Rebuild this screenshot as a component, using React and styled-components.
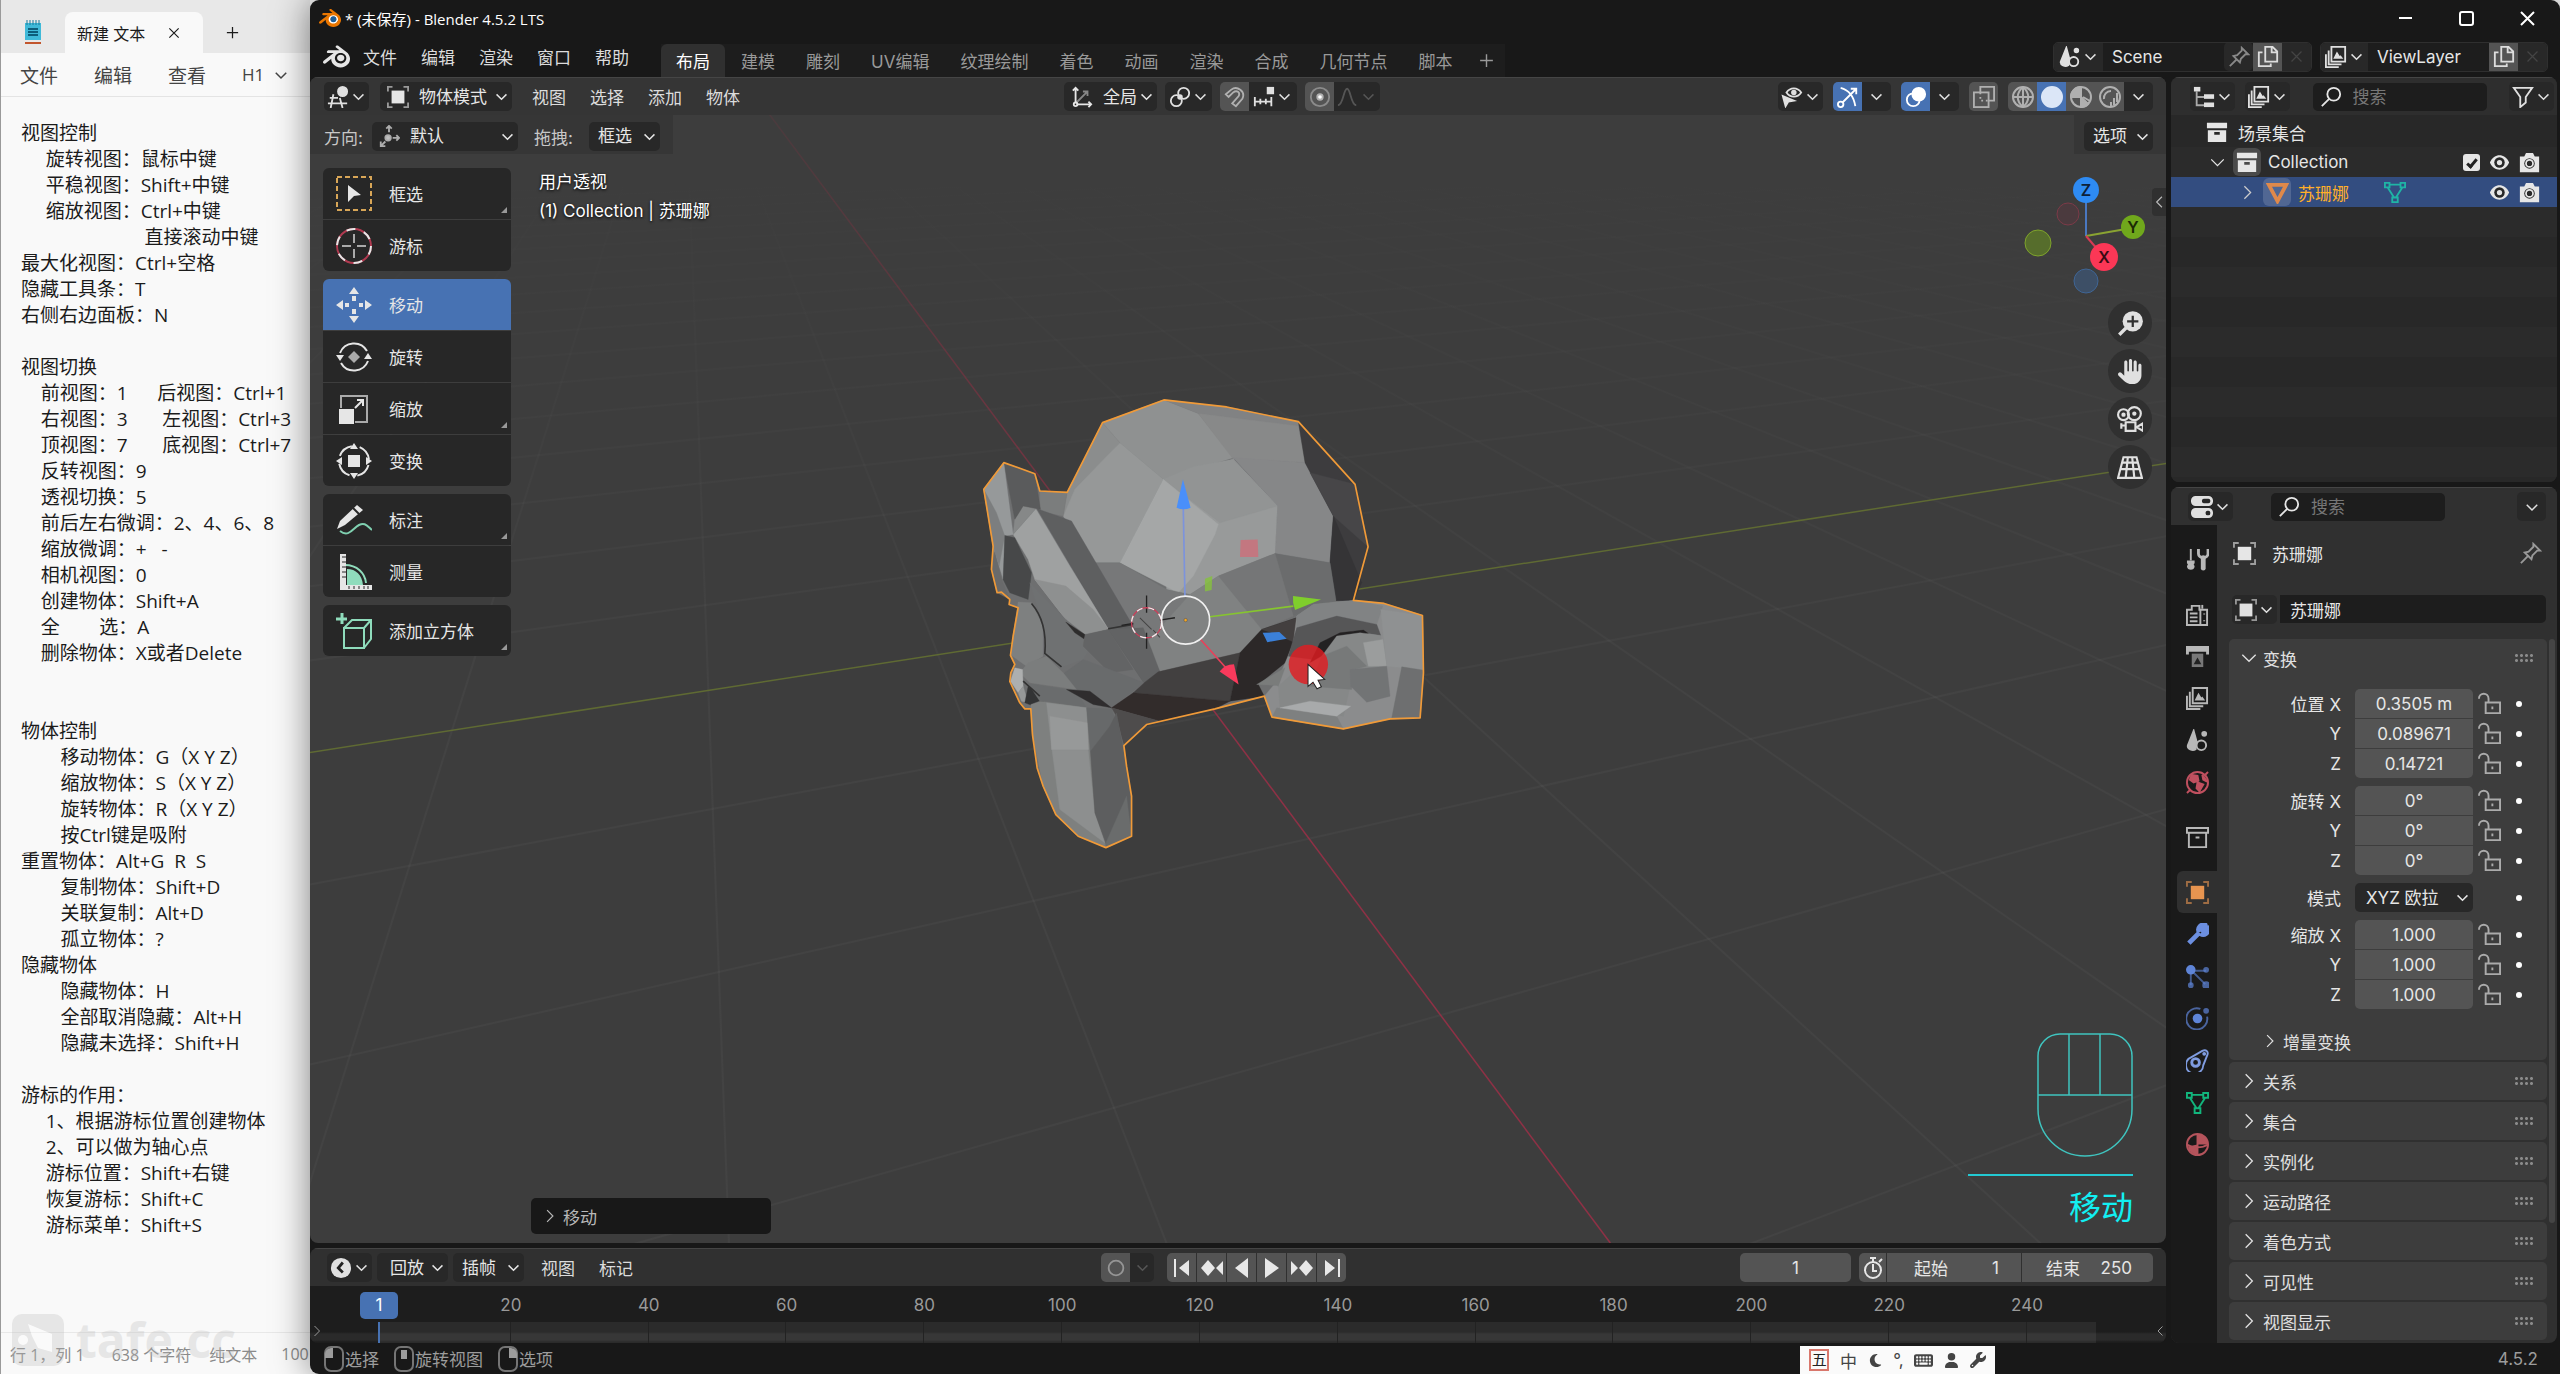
import React from 'react'
import styled, { createGlobalStyle } from 'styled-components'
import { SiBlender } from 'react-icons/si'
import { FaHand, FaUser, FaWrench, FaMoon, FaKeyboard } from 'react-icons/fa6'

const GlobalStyle = createGlobalStyle`
  *, *::before, *::after {
    box-sizing: border-box;
  }
  body {
    margin: 0;
    background: #f9f9f9;
    overflow: hidden;
  }
  body, button, input, select, textarea {
    font-family: Inter, "Noto Sans CJK SC", sans-serif;
    font-size: 17px;
  }
  button, input, select, textarea {
    margin: 0;
    padding: 0;
    border: 0;
    outline: 0;
    background: none;
    color: inherit;
  }
  svg {
    flex: none;
    display: block;
  }
`

/* ---------- icons ---------- */

const glyphs = {
  down: <path d="M5 9l7 7 7-7" />,
  right: <path d="M7 2l10 10-10 10" />,
  left: <path d="M17 3l-9 9 9 9" />,
  wideDown: <path d="M2 7l10 10 10-10" />,
  plus: <path d="M12 3v18M3 12h18" />,
  close: <path d="M4 4l16 16M20 4L4 20" />,
  search: <g><circle cx="15" cy="9" r="7" /><path d="M10 14l-8 8" /></g>,
  pin: <path d="M2 22l7-7M6 11l7 7 1-4 5-5 3 0-7-7 0 3-5 5z" />,
  filter: <path d="M2 2h20l-7 10v6l-6 5V12z" />,
  viewport: <g><path d="M7 9L4 24M14 13l3 11M1 19h21M3 13h9" /><circle cx="17" cy="6" r="5" fill="currentColor" /></g>,
  object: <g><path d="M1 6V1h5M18 1h5v5M23 18v5h-5M6 23H1v-5" opacity=".6" /><rect x="6" y="6" width="12" height="12" fill="currentColor" /></g>,
  orient: <g><path d="M6 18L17 7M13 6h5v5" opacity=".5" /><path d="M5 18V2M2 5l3-3 3 3M6 20h16M19 17l3 3-3 3" /><circle cx="5" cy="20" r="2" /></g>,
  orientDot: <g opacity=".7"><path d="M12 8V1M9 4l3-3 3 3M16 14h7M20 11l3 3-3 3M8 18l-5 5M3 18v5h5" /><circle cx="11" cy="14" r="3" fill="#fff" /></g>,
  pivot: <g><circle cx="16" cy="8" r="6" /><circle cx="8" cy="16" r="6" /><circle cx="12" cy="12" r="2" fill="currentColor" /></g>,
  magnet: <path d="M2 9l6-5c6-5 16 2 12 10l-7 8-4-3 7-8c2-4-2-7-6-4l-5 5z" />,
  increment: <g><path d="M2 12v10M8 14v6M14 14v6M20 12v10M2 17h18" /><rect x="16" y="2" width="6" height="6" fill="currentColor" /></g>,
  proportional: <g><circle cx="12" cy="12" r="10" opacity=".6" /><circle cx="12" cy="12" r="3" fill="#fff" /></g>,
  falloff: <path d="M1 21c6 0 6-18 10-18s4 18 10 18" />,
  visibility: <g><path d="M6 7c4-6 12-6 16 0-4 6-12 6-16 0z" /><circle cx="14" cy="7" r="2" fill="currentColor" /><path d="M2 11l3 11 3-5 6-1z" fill="currentColor" /></g>,
  gizmo: <g><path d="M4 2c8 2 14 8 16 20M6 18L21 3M15 3h6v6" /><circle cx="4" cy="20" r="3" /></g>,
  overlay: <g><circle cx="9" cy="15" r="7" /><circle cx="15" cy="9" r="7" fill="currentColor" /></g>,
  xray: <g><path d="M8 7V1h15v15h-6" /><rect x="1" y="7" width="16" height="16" /><path d="M8 7v9h9" strokeDasharray="2 3" /></g>,
  wire: <g><circle cx="12" cy="12" r="10" /><path d="M2 12h20M12 2v20M12 2c-7 6-7 14 0 20M12 2c7 6 7 14 0 20" /></g>,
  solid: <circle cx="12" cy="12" r="10" fill="currentColor" />,
  material: <g><circle cx="12" cy="12" r="10" /><path d="M12 2v10H2a10 10 0 0 1 10-10M12 12l7 7a10 10 0 0 1-7 3z" fill="currentColor" /><path d="M14 12l7 4M14 15l5 4" /></g>,
  rendered: <g><circle cx="12" cy="12" r="10" /><path d="M6 14a7 7 0 0 1 7-8" /><path d="M19 8v9M16 13v7M13 17v4" /></g>,
  scene: <g><path d="M8 2L2 17c-1 4 5 6 8 4l1-8z" fill="currentColor" /><circle cx="16" cy="17" r="5" /><circle cx="19" cy="5" r="2" fill="currentColor" /></g>,
  layers: <g><path d="M7 1h15v16H7zM4 5v15h14M1 9v14h14" /><path d="M9 14l4-8 3 5 1-1 3 4z" fill="currentColor" stroke="none" /></g>,
  copy: <g><path d="M9 1h8l5 5v11H9zM16 1v6h6" /><path d="M6 7H2v15h13v-3" /></g>,
  tree: <g><path d="M4 6v15h8M4 12h8" opacity=".7" /><rect x="1" y="1" width="7" height="5" fill="currentColor" stroke="none" /><rect x="12" y="9" width="11" height="5" fill="currentColor" stroke="none" /><rect x="12" y="18" width="11" height="5" fill="currentColor" stroke="none" /></g>,
  collection: <path fillRule="evenodd" stroke="none" fill="currentColor" d="M1 2h22v6H1zM2 10h20v13H2zM9 12h6v3H9z" />,
  archive: <path d="M1 2h22v5H1zM3 7v15h18V7M10 12h4" />,
  meshObject: <path d="M3 4h18l-9 17z" strokeWidth="4" />,
  mesh: <path d="M1 2h5v5H1zM18 2h5v5h-5zM9 18h6v5H9zM6 4h12M4 7l7 11M20 7l-7 11" />,
  eye: <g><path d="M1 12c5-11 17-11 22 0-5 11-17 11-22 0z" fill="currentColor" stroke="none" /><circle cx="12" cy="12" r="6" fill="#282828" stroke="none" /><circle cx="12" cy="12" r="3" fill="currentColor" stroke="none" /></g>,
  camera: <g><path d="M1 5h5l2-4h8l2 4h5v18H1z" fill="currentColor" stroke="none" /><circle cx="12" cy="13" r="6" fill="#282828" stroke="none" /><circle cx="12" cy="13" r="4" /></g>,
  props: <g><rect x="1" y="1" width="22" height="9" rx="4" fill="currentColor" /><rect x="12" y="3" width="9" height="5" rx="2" fill="#282828" stroke="none" /><rect x="1" y="14" width="22" height="9" rx="4" fill="currentColor" /><rect x="16" y="16" width="5" height="5" rx="2" fill="#282828" stroke="none" /></g>,
  tool: <g><path d="M5 1v12" /><path d="M1 13h8v3l-1 1 1 2c0 5-8 5-8 0l1-2-1-1z" fill="currentColor" stroke="none" /><path d="M13 1v5c0 2 2 4 5 4s5-2 5-4V1" strokeWidth="3" /><path d="M18 10v11" strokeWidth="5" strokeLinecap="round" /></g>,
  render: <g><path d="M1 7h5V3h8v4h8v16H1z" /><path d="M15 7v16M4 11h8M4 15h8M4 19h8M19 11v1M19 18v1" /><path d="M17 2v4" /></g>,
  output: <g><path d="M0 1h24v9h-3V7H3v3H0z" fill="currentColor" stroke="none" /><path d="M6 9h12v14H6z" fill="currentColor" opacity=".6" stroke="none" /><path d="M8 20l4-7 4 7z" fill="#222" stroke="none" /></g>,
  world: <g><circle cx="12" cy="12" r="11" /><path d="M6 4l6 1 1 5-5 2-4-3zM12 12l6 2-4 7-3-3zM17 4l5 7-4-2z" fill="currentColor" /><path d="M1 23l4-4M19 5l4-4" /></g>,
  modifier: <path d="M3 21L14 10M14 10c-3-5 2-9 6-8l-4 4 3 3 4-4c1 5-4 9-8 6" strokeWidth="5" strokeLinejoin="round" />,
  particles: <g><path d="M6 6h15M5 6v15M6 6l14 14" opacity=".6" /><circle cx="5" cy="5" r="4" fill="currentColor" /><circle cx="21" cy="5" r="2" fill="currentColor" opacity=".7" /><circle cx="5" cy="21" r="2" fill="currentColor" opacity=".7" /><circle cx="21" cy="21" r="3" fill="currentColor" opacity=".7" /></g>,
  physics: <g><path d="M15 2a11 11 0 1 0 7 8" opacity=".7" /><circle cx="12" cy="12" r="5" fill="currentColor" stroke="none" /><circle cx="21" cy="4" r="3" fill="currentColor" stroke="none" opacity=".7" /></g>,
  constraint: <g><path d="M3 10L17 2c4-2 7 1 5 5l-4 10a9 9 0 1 1-15-7z" /><circle cx="10" cy="14" r="4" strokeWidth="3" /><circle cx="19" cy="5" r="1" /></g>,
  matBall: <g><circle cx="12" cy="12" r="11" /><path d="M12 1v11h11A11 11 0 0 0 12 1zM12 12v11A11 11 0 0 1 2 14z" fill="currentColor" stroke="none" /><path d="M12 1v22M1 12c6 4 16 4 22 0" /></g>,
  unlock: <g opacity=".65"><path d="M1 7c0-7 10-7 10 0v4" /><path d="M8 11h15v11H8zM15 15v3" /></g>,
  clock: <g><circle cx="12" cy="12" r="11" fill="currentColor" stroke="none" /><path d="M14 6l-5 6 5 5" stroke="#222" strokeWidth="3" /></g>,
  stopwatch: <g><circle cx="12" cy="14" r="8" /><path d="M12 8v7h4M9 2h6M12 2v4M18 6l3-3" /></g>,
  record: <circle cx="12" cy="12" r="8" opacity=".7" />,
  first: <path d="M4 3h2v18H4zM19 4v16L9 12z" fill="currentColor" stroke="none" />,
  prevKey: <path d="M8 4l7 8-7 8-7-8zM23 5v14l-7-7z" fill="currentColor" stroke="none" />,
  playBack: <path d="M18 2v20L5 12z" fill="currentColor" stroke="none" />,
  play: <path d="M5 2v20l14-10z" fill="currentColor" stroke="none" />,
  nextKey: <path d="M16 4l7 8-7 8-7-8zM1 5v14l7-7z" fill="currentColor" stroke="none" />,
  last: <path d="M18 3h2v18h-2zM5 4v16l10-8z" fill="currentColor" stroke="none" />,
  zoomIn: <g><circle cx="14" cy="10" r="9" fill="currentColor" stroke="none" /><path d="M8 16l-6 6" strokeWidth="3" /><path d="M9 10h10M14 5v10" stroke="#303030" /></g>,
  cameraView: <g><circle cx="6" cy="8" r="5" /><circle cx="16" cy="7" r="6" /><circle cx="6" cy="8" r="1" /><circle cx="16" cy="7" r="1" /><path d="M8 15h9v8H8zM4 16v5M4 18h4M24 16v7l-5-3v-1z" /></g>,
  perspective: <path d="M6 3h12l5 19H1zM5 8h14M3 14h18M10 3L8 22M14 3l2 19" />
}

function Icon({ name, size = 22, color = 'currentColor', stroke = 2 }) {
  return (
    <svg width={size} height={size} viewBox="0 0 24 24" fill="none" color={color} stroke="currentColor" strokeWidth={stroke} aria-hidden="true">
      {glyphs[name]}
    </svg>
  )
}

const toolGlyphs = {
  select: <g><rect x="1" y="1" width="34" height="33" stroke="#d8a657" strokeDasharray="5 3" /><path d="M12 9l13 10-7 1-6 6z" fill="currentColor" stroke="none" /></g>,
  cursor: <g><circle cx="18" cy="18" r="17" stroke="#b03a50" /><circle cx="18" cy="18" r="17" strokeDasharray="9 9" /><path d="M18 6v9M18 21v9M6 18h9M21 18h9" stroke="#aaa" /></g>,
  move: <path d="M18 0l5 7H13zM18 36l5-7H13zM0 18l7-5v10zM36 18l-7-5v10zM16 9h4v5h-4zM16 22h4v5h-4zM9 16h4v4H9zM23 16h4v4h-4z" fill="currentColor" stroke="none" />,
  rotate: <g><path d="M4 14a15 15 0 0 1 27-2M32 22a15 15 0 0 1-27 2" /><path d="M0 16h8l-4 6zM28 20h8l-4-6z" fill="currentColor" stroke="none" /><path d="M18 12l6 6-6 6-6-6z" fill="#aaa" stroke="none" /></g>,
  scale: <g><path d="M5 17V5h26v26H19" stroke="#aaa" /><path d="M3 18h15v15H3z" fill="currentColor" stroke="none" /><path d="M19 17l8-8M21 9h6v6" /></g>,
  transform: <g><circle cx="18" cy="18" r="15" strokeDasharray="16 8" strokeDashoffset="-4" /><path d="M12 12h12v12H12zM18 0l4 6h-8zM18 36l4-6h-8zM0 18l6-4v8zM36 18l-6-4v8z" fill="currentColor" stroke="none" /></g>,
  annotate: <g><path d="M4 29c9 7 13-3 19-6 6-3 8 1 13 5" stroke="#7fd0b0" /><path d="M1 27l3-8L21 3l6 5L9 23z" fill="currentColor" stroke="none" /><path d="M17 6l6 6" stroke="#272727" /></g>,
  measure: <g><path d="M11 31V15c9 0 15 6 16 16z" fill="#8fdcbc" stroke="none" /><path d="M9 11c12 0 20 8 21 18" stroke="#8fdcbc" /><path d="M4 0h6v31h26v5H4z" fill="currentColor" stroke="none" /><path d="M10 3H6M10 8H6M10 13H6M10 18H6M10 23H6M13 35v-3M18 35v-3M23 35v-3M28 35v-3M32 35v-3" stroke="#272727" strokeWidth="1" /></g>,
  addCube: <g stroke="#8fdcbc"><path d="M8 15h20v20H8zM8 15l8-8h19v19l-7 9M28 15l7-8" /><path d="M6 0v11M0 6h11" strokeWidth="3" /></g>
}

function ToolIcon({ name }) {
  return (
    <svg width="36" height="36" viewBox="0 0 36 36" fill="none" stroke="currentColor" strokeWidth="2" aria-hidden="true">
      {toolGlyphs[name]}
    </svg>
  )
}

const AppLogo = () => (
  <svg width="22" height="22" viewBox="0 0 24 24" aria-hidden="true">
    <circle cx="15" cy="13" r="6" fill="#fff" />
    <SiBlender size={24} color="#ea7600" />
    <circle cx="15.7" cy="13.3" r="3.2" fill="#1d5f9c" />
  </svg>
)

const NotepadIcon = () => (
  <svg width="18" height="24" viewBox="0 0 18 24" aria-hidden="true">
    <path d="M1 3h16v17H1z" fill="#3fb9d8" />
    <path d="M1 20h16v2H1z" fill="#e8e8e8" />
    <path d="M1 22h16v2H1z" fill="#c2562d" />
    <path d="M3 0v5M6 0v5M9 0v5M12 0v5M15 0v5" stroke="#167a9c" />
    <path d="M4 9h10M4 12h10M4 15h10" stroke="#0c5d7a" strokeWidth="2" />
  </svg>
)

/* ---------- notes window ---------- */

const Desktop = styled.div`
  display: grid;
  grid-template-columns: 310px minmax(0, 1fr);
  grid-template-rows: minmax(0, 1fr);
  height: 100vh;
`
const Notes = styled.section`
  display: flex;
  flex-direction: column;
  overflow: hidden;
  border-left: 1px solid #9a9a9a;
  background: #f9f9f9;
  color: #1b1b1b;
  font-family: "Open Sans", "Noto Sans CJK SC", sans-serif;
  button, textarea {
    font-family: inherit;
  }
`
const NotesTabs = styled.div`
  display: flex;
  align-items: flex-end;
  height: 53px;
  padding-left: 23px;
  background: #e8e8e8;
  > svg {
    margin: 0 23px 9px 0;
  }
`
const NotesTab = styled.div`
  display: flex;
  align-items: center;
  justify-content: space-between;
  width: 138px;
  height: 41px;
  padding: 0 22px 0 12px;
  border-radius: 8px 8px 0 0;
  background: #f9f9f9;
  font-size: 16px;
`
const NotesAdd = styled.button`
  height: 41px;
  margin-left: 22px;
`
const NotesMenu = styled.div`
  display: flex;
  align-items: center;
  height: 44px;
  padding-left: 19px;
  gap: 36px;
  border-bottom: 1px solid #e4e4e4;
  color: #444;
  button {
    display: flex;
    align-items: center;
    gap: 8px;
    font-size: 19px;
    &:last-child {
      font-size: 17px;
    }
  }
`
const NotesText = styled.textarea`
  flex: 1;
  padding: 23px 0 0 20px;
  overflow: hidden;
  resize: none;
  white-space: pre;
  font-size: 19px;
  line-height: 26px;
`
const NotesStatus = styled.div`
  position: relative;
  display: flex;
  align-items: center;
  height: 42px;
  padding-left: 9px;
  gap: 18px;
  border-top: 1px solid #e8e8e8;
  color: #8a8a8a;
  font-size: 16px;
  white-space: nowrap;
`
const StatusItem = styled.span`
  &:nth-child(2) {
    margin-right: 9px;
  }
  &:last-child {
    margin-left: 6px;
  }
`
const Watermark = styled.div`
  position: absolute;
  left: 11px;
  bottom: 8px;
  display: flex;
  align-items: center;
  gap: 12px;
  opacity: .3;
  color: #bbb;
  font-size: 48px;
  font-weight: 700;
  line-height: 52px;
`

const noteText = `视图控制
     旋转视图：鼠标中键
     平稳视图：Shift+中键
     缩放视图：Ctrl+中键
                         直接滚动中键
最大化视图：Ctrl+空格
隐藏工具条：T
右侧右边面板：N

视图切换
    前视图：1      后视图：Ctrl+1
    右视图：3       左视图：Ctrl+3
    顶视图：7       底视图：Ctrl+7
    反转视图：9
    透视切换：5
    前后左右微调：2、4、6、8
    缩放微调：+   -
    相机视图：0
    创建物体：Shift+A
    全        选：A
    删除物体：X或者Delete


物体控制
        移动物体：G（X Y Z）
        缩放物体：S（X Y Z）
        旋转物体：R（X Y Z）
        按Ctrl键是吸附
重置物体：Alt+G  R  S
        复制物体：Shift+D
        关联复制：Alt+D
        孤立物体：?
隐藏物体
        隐藏物体：H
        全部取消隐藏：Alt+H
        隐藏未选择：Shift+H

游标的作用：
     1、根据游标位置创建物体
     2、可以做为轴心点
     游标位置：Shift+右键
     恢复游标：Shift+C
     游标菜单：Shift+S`

function NotesWindow() {
  return (
    <Notes>
      <NotesTabs>
        <NotepadIcon />
        <NotesTab>
          新建 文本
          <button aria-label="关闭"><Icon name="close" size={14} /></button>
        </NotesTab>
        <NotesAdd aria-label="新标签"><Icon name="plus" size={15} /></NotesAdd>
      </NotesTabs>
      <NotesMenu>
        <button>文件</button>
        <button>编辑</button>
        <button>查看</button>
        <button>H1 <Icon name="down" size={18} /></button>
      </NotesMenu>
      <NotesText aria-label="文本" spellCheck="false" defaultValue={noteText} />
      <NotesStatus>
        <Watermark>
          <svg width="52" height="52" viewBox="0 0 52 52">
            <rect width="52" height="52" rx="10" fill="#bbb" />
            <circle cx="11" cy="26" r="5" fill="#fff" />
            <path d="M16 10l24 10v18l-14-4-6-12z" fill="#fff" />
          </svg>
          tafe.cc
        </Watermark>
        <StatusItem>行 1，列 1</StatusItem>
        <StatusItem>638 个字符</StatusItem>
        <StatusItem>纯文本</StatusItem>
        <StatusItem>100</StatusItem>
      </NotesStatus>
    </Notes>
  )
}

/* ---------- shared controls ---------- */

const Row = styled.div`
  display: flex;
  align-items: center;
  gap: ${p => p.$gap || 0}px;
`
const Joined = styled.div`
  display: flex;
  height: 29px;
  gap: ${p => p.$gap || 0}px;
  border-radius: 5px;
  overflow: hidden;
`
const Tool = styled.button`
  display: flex;
  align-items: center;
  justify-content: center;
  gap: 1px;
  height: 29px;
  width: ${p => p.$w || 29}px;
  border-radius: ${p => (p.$flat ? 0 : 5)}px;
  background: ${p => (p.$active ? '#4772b3' : p.$raised ? '#545454' : '#282828')};
  color: ${p => (p.$dim ? '#555' : p.$active ? '#fff' : p.$raised ? '#b0b0b0' : '#e0e0e0')};
`
const Menu = styled.button`
  height: 29px;
  padding: 0 12px;
  color: #dcdcdc;
`
const Picker = styled.label`
  display: flex;
  align-items: center;
  width: ${p => p.$w}px;
  height: 29px;
  padding: 0 2px 0 ${p => (p.$pad || 7)}px;
  border-radius: 5px;
  background: #282828;
  color: #e6e6e6;
`
const PickerSelect = styled.select`
  flex: 1;
  min-width: 0;
  height: 29px;
  padding-left: ${p => p.$pad || 0}px;
  appearance: none;
`

function Dropdown({ icon, value, label, width, pad, textPad }) {
  return (
    <Picker $w={width} $pad={pad}>
      {icon && <Icon name={icon} />}
      <PickerSelect aria-label={label} $pad={textPad} defaultValue={value}>
        <option>{value}</option>
      </PickerSelect>
      <Icon name="down" size={17} />
    </Picker>
  )
}

function IconMenu({ icon, label, width = 45, flat, dim }) {
  return (
    <Tool aria-label={label} $w={width} $flat={flat} $dim={dim}>
      <Icon name={icon} size={22} />
      <Icon name="down" size={17} />
    </Tool>
  )
}

/* ---------- main window ---------- */

const Window = styled.main`
  position: relative;
  display: flex;
  flex-direction: column;
  min-width: 0;
  border-radius: 9px 9px 0 9px;
  background: #181818;
  color: #e6e6e6;
  box-shadow: 0 0 36px rgba(0, 0, 0, .5);
`
const TitleBar = styled.header`
  display: flex;
  align-items: center;
  height: 36px;
  flex: none;
  padding: 0 25px 0 9px;
  gap: 4px;
  color: #fff;
  font-family: "Open Sans", "Noto Sans CJK SC", sans-serif;
  font-size: 15px;
`
const WindowButtons = styled.div`
  display: flex;
  gap: 46px;
  margin-left: auto;
`
const TopBar = styled.div`
  display: flex;
  align-items: center;
  height: 41px;
  flex: none;
  padding: 0 12px 0 13px;
`
const Logo = styled.div`
  padding-right: 1px;
`
const Workspaces = styled.nav`
  display: flex;
  align-self: flex-end;
  gap: 1px;
  margin-left: 20px;
  background: #1d1d1d;
`
const Workspace = styled.button`
  height: 33px;
  padding: 0 15px;
  border-radius: 6px 6px 0 0;
  background: ${p => (p.$active ? '#303030' : 'none')};
  color: ${p => (p.$active ? '#fff' : '#999')};
  &:last-child {
    padding: 0 10px;
  }
`
const DataBlock = styled.div`
  display: flex;
  height: 30px;
  width: ${p => p.$w}px;
  margin-left: ${p => p.$left || '8px'};
  border: 1px solid #2f2f2f;
  border-radius: 5px;
  background: #1d1d1d;
  align-items: center;
  overflow: hidden;
  input {
    flex: 1;
    min-width: 0;
    padding-left: 9px;
  }
`
const Work = styled.div`
  flex: 1;
  display: grid;
  grid-template-columns: minmax(0, 1fr) 386px;
  grid-template-rows: minmax(0, 1fr);
  gap: 5px;
  min-height: 0;
  padding-right: 3px;
`
const Column = styled.div`
  display: flex;
  flex-direction: column;
  gap: 5px;
  min-height: 0;
`
const Area = styled.section`
  position: relative;
  display: flex;
  flex-direction: column;
  border-radius: 8px;
  overflow: hidden;
  background: ${p => p.$bg};
  ${p => (p.$h ? `flex: none; height: ${p.$h}px;` : 'flex: 1; min-height: 0;')}
`
const AreaHeader = styled.div`
  position: relative;
  display: flex;
  align-items: center;
  height: 38px;
  flex: none;
  padding: 0 ${p => p.$end || 13}px 0 ${p => p.$start || 14}px;
  border-top: 1px solid #454545;
  background: ${p => p.$bg || '#303030'};
`
const HeaderSide = styled.div`
  flex: 1;
  display: flex;
  align-items: center;
  justify-content: ${p => (p.$end ? 'flex-end' : 'flex-start')};
  gap: ${p => p.$gap || 0}px;
`
const HeaderCenter = styled.div`
  display: flex;
  gap: ${p => p.$gap}px;
  margin-right: 33px;
`

/* ---------- viewport ---------- */

const Scene = styled.svg`
  position: absolute;
  inset: 0;
  width: 100%;
  height: 100%;
`
const ToolSettings = styled.div`
  position: relative;
  display: flex;
  justify-content: space-between;
  height: 39px;
`
const SettingsGroup = styled.div`
  display: flex;
  align-items: center;
  padding: 3px 13px 0 ${p => (p.$end ? 10 : 14)}px;
  background: rgba(48, 48, 48, .5);
  color: #c8c8c8;
`
const SettingLabel = styled.span`
  width: ${p => p.$w}px;
  padding-left: ${p => p.$pad || 0}px;
`
const ViewBody = styled.div`
  position: relative;
  flex: 1;
  display: grid;
  grid-template-columns: 221px 1fr auto;
`
const Toolbar = styled.div`
  display: flex;
  flex-direction: column;
  gap: 8px;
  width: 201px;
  padding: 14px 0 0 13px;
`
const ToolGroup = styled.div`
  display: flex;
  flex-direction: column;
  gap: 1px;
  border-radius: 6px;
  overflow: hidden;
`
const ToolItem = styled.button`
  position: relative;
  display: flex;
  align-items: center;
  gap: 17px;
  height: 51px;
  padding-left: 13px;
  background: ${p => (p.$active ? '#4772b3' : '#272727')};
  color: #e6e6e6;
  &::after {
    content: "";
    display: ${p => (p.$more ? 'block' : 'none')};
    position: absolute;
    right: 4px;
    bottom: 6px;
    border: 3px solid transparent;
    border-right-color: #999;
    border-bottom-color: #999;
  }
`
const ViewMiddle = styled.div`
  display: flex;
  flex-direction: column;
  justify-content: space-between;
  align-items: flex-start;
  padding: 14px 0 9px;
`
const ViewInfo = styled.div`
  padding-left: 8px;
  color: #fff;
  line-height: 29px;
  text-shadow: 0 1px 3px #000;
`
const Operator = styled.button`
  display: flex;
  align-items: center;
  gap: 6px;
  width: 240px;
  height: 36px;
  padding-left: 12px;
  border-radius: 5px;
  background: #181818;
  color: #b8b8b8;
`
const ViewSide = styled.div`
  display: flex;
  flex-direction: column;
  justify-content: space-between;
  align-items: flex-end;
  padding: 22px 0 15px;
`
const Navigation = styled.div`
  display: flex;
  flex-direction: column;
  align-items: flex-end;
  gap: 4px;
  padding-right: 14px;
`
const NavButton = styled.button`
  display: flex;
  align-items: center;
  justify-content: center;
  width: 44px;
  height: 44px;
  border-radius: 50%;
  background: #303030;
  color: #e0e0e0;
`
const SidebarToggle = styled.button`
  position: absolute;
  top: 34px;
  right: 0;
  width: 14px;
  height: 28px;
  border-radius: 4px 0 0 4px;
  background: #303030;
  color: #bbb;
`
const Screencast = styled.div`
  display: flex;
  flex-direction: column;
  align-items: flex-end;
  padding-right: 33px;
  color: #12eff2;
  font-size: 32px;
  line-height: 40px;
`
const CastLine = styled.div`
  width: 165px;
  height: 2px;
  margin: 17px 0 12px;
  background: #23c9d2;
`

// floor grid: families of lines through the two vanishing points
const vpX = [683, -2]
const vpY = [5000, 5]
const gridLines = []
for (let t = -24; t <= 10; t++) {
  if (t === 0) continue
  const y = 5 + 618 / (1 - 0.0495 * t)
  const x = 310 + (753 - y) / 0.1557
  const k = (1300 - vpX[1]) / (y - vpX[1])
  gridLines.push([vpX[0], vpX[1], vpX[0] + (x - vpX[0]) * k, 1300])
}
for (let t = -20; t <= 5; t++) {
  if (t === 0) continue
  const y = -2 + 624.6 / (1 - 0.1287 * t)
  const x = 771 + (y - 117) / 1.343
  const k = (300 - vpY[0]) / (x - vpY[0])
  gridLines.push([300, vpY[1] + (y - vpY[1]) * k, vpY[0], vpY[1]])
}

const outline = '132,250 225,283 240,335 322,339 428,130 612,62 800,83 1015,127 1185,315 1224,502 1180,663 1272,672 1387,708 1390,880 1380,1015 1290,1018 1150,1048 936,1013 913,950 765,988 560,1035 492,1098 500,1160 515,1250 515,1370 438,1404 355,1370 288,1305 250,1220 232,1165 218,1065 213,988 195,988 180,970 150,906 153,880 165,855 152,828 160,770 175,685 148,675 150,660 125,638 112,640 95,570 100,500 72,330'

const facets = [
  ['#6e6f70', outline],
  ['#8f9191', '428,130 612,62 715,103 820,235 610,300 480,190'],
  ['#818283', '612,62 800,83 1015,127 1018,162 900,150 715,103'],
  ['#888989', '715,103 1015,140 1035,250 820,240'],
  ['#868788', '820,235 1035,250 1120,410 1110,550 945,522 952,380'],
  ['#8b8d8d', '428,130 480,190 345,340 310,410 322,339'],
  ['#969898', '480,190 610,300 480,550 400,550 310,410 345,330'],
  ['#989a9a', '610,300 820,240 952,380 945,522 775,590 690,645 620,630'],
  ['#929494', '610,300 700,262 820,240 952,380 780,430'],
  ['#a5a7a7', '610,300 775,435 765,465 700,590 655,640 480,550'],
  ['#3d3c3e', '1015,127 1185,315 1224,502 1180,663 1128,663 1110,550 1120,410 1035,250'],
  ['#474648', '1050,280 1185,315 1224,502 1120,410'],
  ['#353436', '1110,550 1120,410 1205,610 1180,663 1128,663'],
  ['#7b7d7d', '240,335 322,339 310,410 240,395'],
  ['#777879', '400,550 480,550 620,630 690,645 560,790 595,877 445,750'],
  ['#6b6c6d', '945,522 1110,550 1128,663 1060,675 1000,710'],
  ['#757677', '775,590 945,522 1000,710 905,750'],
  ['#808282', '690,645 775,590 905,750 840,820 595,877 560,790'],
  ['#5e5f60', '232,388 335,425 600,877 552,910 445,750'],
  ['#626364', '445,750 550,745 600,877 552,910'],
  ['#9fa1a1', '160,465 228,388 330,560 445,748 375,765 318,720 225,600 205,540'],
  ['#8e9090', '225,600 318,620 400,690 445,748 375,765 318,720'],
  ['#868888', '160,465 165,420 190,380 228,388'],
  ['#5a5b5c', '132,250 225,283 242,390 190,380 165,420'],
  ['#96999a', '72,330 132,250 160,465 135,470 130,600 100,500'],
  ['#7c7e7f', '72,330 100,500 118,560 135,470 110,400'],
  ['#474849', '135,468 165,475 215,580 205,660 150,640 130,600'],
  ['#696a6b', '95,570 105,520 125,600 150,660 112,640'],
  ['#7e8080', '175,668 215,670 250,740 250,830 200,860 155,828 160,770'],
  ['#6f7172', '210,610 318,720 375,765 400,790 370,840 300,865 250,825 250,740'],
  ['#636465', '375,765 445,750 520,870 450,880 370,800'],
  ['#696b6c', '370,840 450,870 552,910 455,985 350,935 300,890'],
  ['#7b7d7d', '205,850 260,830 310,880 350,930 210,910 180,880'],
  ['#adafaf', '165,865 188,870 190,920 175,940 152,905'],
  ['#969898', '175,940 190,920 205,970 185,965'],
  ['#333435', '205,920 235,940 262,980 235,985 195,970'],
  ['#6a6c6d', '205,912 350,935 380,985 240,965'],
  ['#2f2d2e', '320,930 390,935 455,985 400,975'],
  ['#2d2c2c', '318,728 375,765 372,778 345,760'],
  ['#424040', '595,877 840,820 810,965 520,940 555,908'],
  ['#322c2b', '455,985 520,940 810,965 765,988 600,1025'],
  ['#4e4c4c', '455,985 600,1025 560,1035 492,1098 470,1010'],
  ['#2c2828', '840,820 905,750 1010,715 1000,830 895,915 913,950 810,965'],
  ['#433f3f', '905,750 1010,715 1005,790 950,765'],
  ['#7e807f', '213,975 240,965 380,985 390,1110 405,1300 438,1400 355,1370 288,1305 250,1220 218,1065'],
  ['#8d8f8f', '260,970 380,985 385,1110 405,1300 435,1390 300,1290 275,1100'],
  ['#979999', '270,1010 382,1030 386,1110 275,1110'],
  ['#67696a', '380,985 455,988 492,1098 450,1040 392,1115'],
  ['#5d5e5f', '392,1115 450,1040 470,1000 500,1160 515,1250 515,1370 438,1390 405,1300'],
  ['#6a6c6c', '438,1390 500,1250 515,1370 438,1404'],
  ['#8b8c8d', '1010,710 1060,675 1180,663 1272,672 1387,708 1390,880 1380,1015 1290,1018 1150,1048 936,1013 913,950 955,900 1000,790'],
  ['#818384', '1010,710 1060,675 1180,663 1268,680 1250,735 1130,710 1010,745'],
  ['#565657', '1010,745 1130,710 1250,735 1262,768 1180,755 1100,780 1060,840 985,830'],
  ['#232122', '1050,850 1080,790 1140,760 1210,752 1225,762 1130,778 1085,840'],
  ['#868888', '1085,830 1130,770 1200,760 1262,768 1280,860 1180,870 1170,920 1150,1010 960,985 955,920 1000,880'],
  ['#777979', '1085,830 1160,800 1220,860 1180,870 1175,930 1050,920'],
  ['#9b9d9d', '1210,790 1268,780 1280,860 1225,860'],
  ['#8f9192', '1262,690 1387,708 1390,870 1280,860'],
  ['#6e6f70', '1325,862 1390,872 1380,1015 1295,1015'],
  ['#727475', '1170,870 1280,860 1290,950 1220,968 1172,920'],
  ['#7e8080', '950,985 1130,1010 1150,1048 936,1013'],
  ['#a8aaab', '960,985 1050,965 1172,980 1130,1010'],
  ['#7a7c7b', '890,915 975,865 955,920 950,918']
]

function Viewport3D() {
  return (
    <Scene viewBox="310 78 1856 1165" preserveAspectRatio="xMidYMid slice" aria-hidden="true">
      <defs>
        <linearGradient id="fade" gradientUnits="userSpaceOnUse" x1="0" y1="78" x2="0" y2="700">
          <stop offset="0.1" stopColor="#fff" stopOpacity="0" />
          <stop offset="1" stopColor="#fff" stopOpacity=".03" />
        </linearGradient>
        <linearGradient id="axisX" gradientUnits="userSpaceOnUse" x1="771" y1="117" x2="1200" y2="700">
          <stop offset="0" stopColor="#80303f" stopOpacity=".2" />
          <stop offset="1" stopColor="#8f3045" />
        </linearGradient>
      </defs>
      <g stroke="url(#fade)" strokeWidth="2">
        {gridLines.map((l, i) => <line key={i} x1={l[0]} y1={l[1]} x2={l[2]} y2={l[3]} />)}
      </g>
      <line x1="742" y1="78" x2="1610" y2="1243" stroke="url(#axisX)" strokeWidth="1.5" />
      <line x1="310" y1="753" x2="2166" y2="464" stroke="#5f6a33" strokeWidth="1.5" />
      <g transform="translate(960 380) scale(.3333)">
        {facets.map(([fill, points], i) => <polygon key={i} points={points} fill={fill} stroke={fill} />)}
        <path d="M215 672c35 40 45 90 40 150l50 40M445 748l75-13M190 905l50 45" fill="none" stroke="#333" strokeWidth="5" />
        <polygon points={outline} fill="none" stroke="#f09a38" strokeWidth="5" strokeLinejoin="round" />
        <path d="M560 648v52M560 760v48M485 738l35-6M600 722l45-7" stroke="#222" strokeWidth="4" />
        <path d="M540 715l35 35M580 752l20 22" stroke="#444" strokeWidth="3" />
        <circle cx="560" cy="730" r="45" fill="none" stroke="#c8405a" strokeWidth="4" />
        <circle cx="560" cy="730" r="45" fill="none" stroke="#eee" strokeWidth="4" strokeDasharray="18 18" />
        <path d="M675 650L670 385" stroke="#7c93dc" strokeWidth="5" />
        <path d="M669 300l23 85q-21 10-42 0z" fill="#4a8ffa" />
        <path d="M750 712l250-32" stroke="#86c52f" strokeWidth="5" />
        <path d="M999 650l84 10-78 32q-8-20-6-42z" fill="#7fce2c" />
        <path d="M722 780l75 84" stroke="#e8405a" strokeWidth="5" />
        <path d="M779 876q15-22 43-22l14 61z" fill="#f93a5c" />
        <path d="M842 482l51-2 2 53h-55z" fill="#e06070" opacity=".6" />
        <path d="M735 598l22-8-2 42-20 4z" fill="#86c23c" opacity=".8" />
        <path d="M908 760l50-2 22 20-58 10z" fill="#3b80d8" />
        <circle cx="677" cy="722" r="72" fill="none" stroke="#f0f0f0" strokeWidth="5" />
        <circle cx="677" cy="722" r="5" fill="#f5a623" stroke="#333" />
        <circle cx="1045" cy="855" r="59" fill="#e31b20" opacity=".8" />
        <path d="M1044 855v66l15-13 12 20 13-6-10-20 20-2z" fill="#fff" stroke="#222" strokeWidth="3" />
      </g>
    </Scene>
  )
}

const AxisBall = styled.svg`
  text {
    font: 600 16px Inter, sans-serif;
    text-anchor: middle;
  }
`

const NavGizmo = () => (
  <AxisBall width="130" height="121" viewBox="2022 176 130 121" aria-hidden="true">
    <circle cx="2068" cy="214" r="11" fill="#4b3a3e" stroke="#7c3a48" />
    <circle cx="2086" cy="281" r="12" fill="#3d4f66" stroke="#3f6595" />
    <circle cx="2038" cy="243" r="13" fill="#566d2c" stroke="#7fa32c" />
    <path d="M2086 236V196" stroke="#4a78c0" strokeWidth="2" />
    <path d="M2086 236l40-7" stroke="#8aa332" strokeWidth="2" />
    <path d="M2086 236l12 14" stroke="#d83a55" strokeWidth="2" />
    <circle cx="2086" cy="190" r="13" fill="#2e8bf3" />
    <circle cx="2133" cy="227" r="12" fill="#70a81c" />
    <circle cx="2104" cy="257" r="14" fill="#fb3756" />
    <text x="2086" y="196" fill="#0d2138">Z</text>
    <text x="2133" y="233" fill="#1b2a05">Y</text>
    <text x="2104" y="263" fill="#3a0a13">X</text>
  </AxisBall>
)

const toolGroups = [
  [['select', '框选', true], ['cursor', '游标']],
  [['move', '移动'], ['rotate', '旋转'], ['scale', '缩放', true], ['transform', '变换']],
  [['annotate', '标注', true], ['measure', '测量']],
  [['addCube', '添加立方体', true]]
]

function ViewportArea() {
  return (
    <Area $bg="#3d3d3d">
      <Viewport3D />
      <AreaHeader $bg="#353535">
        <HeaderSide>
          <Row $gap={11}>
            <IconMenu icon="viewport" label="编辑器类型" />
            <Dropdown icon="object" value="物体模式" label="模式" width={132} textPad={10} />
          </Row>
          <Row $gap={8}><span />
            <Row>{['视图', '选择', '添加', '物体'].map(m => <Menu key={m}>{m}</Menu>)}</Row>
          </Row>
        </HeaderSide>
        <HeaderCenter $gap={8}>
          <Dropdown icon="orient" value="全局" label="坐标系" width={93} textPad={10} />
          <IconMenu icon="pivot" label="轴心点" width={47} />
          <Joined>
            <Tool aria-label="吸附" $flat $raised><Icon name="magnet" /></Tool>
            <IconMenu icon="increment" label="吸附到" width={48} flat />
          </Joined>
          <Joined>
            <Tool aria-label="衰减编辑" $flat $raised><Icon name="proportional" /></Tool>
            <IconMenu icon="falloff" label="衰减" width={46} flat dim />
          </Joined>
        </HeaderCenter>
        <HeaderSide $end $gap={10}>
          <IconMenu icon="visibility" label="可见性" />
          <Joined>
            <Tool aria-label="显示Gizmo" $flat $active><Icon name="gizmo" /></Tool>
            <Tool aria-label="Gizmo选项" $flat><Icon name="down" size={17} /></Tool>
          </Joined>
          <Joined>
            <Tool aria-label="显示叠加层" $flat $active><Icon name="overlay" /></Tool>
            <Tool aria-label="叠加层选项" $flat><Icon name="down" size={17} /></Tool>
          </Joined>
          <Tool aria-label="透视模式" $raised><Icon name="xray" /></Tool>
          <Joined>
            <Tool aria-label="线框" $flat $raised><Icon name="wire" size={24} /></Tool>
            <Tool aria-label="实体" $flat $active><Icon name="solid" size={24} color="#dbe6f7" /></Tool>
            <Tool aria-label="材质预览" $flat $raised><Icon name="material" size={24} /></Tool>
            <Tool aria-label="渲染" $flat $raised><Icon name="rendered" size={24} /></Tool>
            <Tool aria-label="着色选项" $flat><Icon name="down" size={17} /></Tool>
          </Joined>
        </HeaderSide>
      </AreaHeader>
      <ToolSettings>
        <SettingsGroup>
          <SettingLabel $w={48}>方向:</SettingLabel>
          <Dropdown icon="orientDot" value="默认" label="方向" width={146} pad={6} textPad={10} />
          <SettingLabel $w={71} $pad={16}>拖拽:</SettingLabel>
          <Dropdown value="框选" label="拖拽" width={71} pad={9} />
        </SettingsGroup>
        <SettingsGroup $end>
          <Dropdown value="选项" label="选项" width={69} pad={9} />
        </SettingsGroup>
      </ToolSettings>
      <ViewBody>
        <Toolbar>
          {toolGroups.map((group, i) => (
            <ToolGroup key={i}>
              {group.map(([icon, label, more]) => (
                <ToolItem key={icon} $active={icon === 'move'} $more={more}>
                  <ToolIcon name={icon} />
                  {label}
                </ToolItem>
              ))}
            </ToolGroup>
          ))}
        </Toolbar>
        <ViewMiddle>
          <ViewInfo>
            <div>用户透视</div>
            <div>(1) Collection | 苏珊娜</div>
          </ViewInfo>
          <Operator><Icon name="right" size={14} />移动</Operator>
        </ViewMiddle>
        <ViewSide>
          <Navigation>
            <NavGizmo />
            <NavButton aria-label="缩放视图"><Icon name="zoomIn" size={27} /></NavButton>
            <NavButton aria-label="平移视图"><FaHand size={25} /></NavButton>
            <NavButton aria-label="相机视图"><Icon name="cameraView" size={26} /></NavButton>
            <NavButton aria-label="切换透视"><Icon name="perspective" size={26} /></NavButton>
          </Navigation>
          <Screencast>
            <svg width="96" height="124" viewBox="0 0 96 124" fill="none" stroke="#3fc4bf" strokeWidth="1.5" aria-hidden="true">
              <path d="M1 23a22 22 0 0 1 22-22h50a22 22 0 0 1 22 22v53a47 47 0 0 1-94 0zM1 62h94M32 1v61M63 1v61" />
            </svg>
            <CastLine />
            移动
          </Screencast>
        </ViewSide>
        <SidebarToggle aria-label="侧栏"><Icon name="left" size={14} /></SidebarToggle>
      </ViewBody>
    </Area>
  )
}

/* ---------- timeline ---------- */

const NumberField = styled.label`
  display: flex;
  align-items: center;
  width: ${p => p.$w}px;
  height: 29px;
  padding: 0 ${p => p.$end || 0}px 0 ${p => p.$start || 0}px;
  border-radius: ${p => (p.$flat ? 0 : 5)}px;
  background: #545454;
  color: #e6e6e6;
  input {
    flex: 1;
    min-width: 0;
    text-align: ${p => (p.$center ? 'center' : 'right')};
  }
`
const Ruler = styled.div`
  display: flex;
  align-items: center;
  height: 36px;
  padding-top: 2px;
  background: #1d1d1d;
  color: #999;
`
const RulerStart = styled.div`
  display: flex;
  justify-content: center;
  width: 132px;
  padding-left: 6px;
`
const RulerMark = styled.div`
  flex: 1;
  text-align: center;
`
const RulerEnd = styled.div`
  width: 70px;
`
const CurrentFrame = styled.div`
  width: 38px;
  height: 27px;
  border-radius: 5px;
  background: #4772b3;
  color: #fff;
  line-height: 27px;
  text-align: center;
`
const Track = styled.div`
  flex: 1;
  display: flex;
  align-items: stretch;
  background: linear-gradient(#1d1d1d 10px, #2a2a2a 12px, #2a2a2a 18px, #1d1d1d 20px);
  ${RulerStart} {
    padding-left: 0;
  }
`
const TrackHead = styled.div`
  width: 70px;
  padding: 3px 0 0 1px;
  border-right: 2px solid #4772b3;
  color: #999;
`
const TrackGap = styled.div`
  flex: 1;
  background: linear-gradient(#2b2b2b 10px, #373737 12px, #373737 18px, #2b2b2b 20px);
`
const TrackCell = styled(TrackGap)`
  background: linear-gradient(90deg, transparent 49%, #222 49%, #222 50%, transparent 50%), linear-gradient(#2b2b2b 10px, #373737 12px, #373737 18px, #2b2b2b 20px);
`
const TrackTail = styled.div`
  width: 70px;
  display: flex;
  justify-content: flex-end;
  padding-top: 3px;
  color: #999;
`

const frames = [20, 40, 60, 80, 100, 120, 140, 160, 180, 200, 220, 240]
const transport = [
  ['first', '跳转到起点'],
  ['prevKey', '上一关键帧'],
  ['playBack', '倒放'],
  ['play', '播放'],
  ['nextKey', '下一关键帧'],
  ['last', '跳转到终点']
]

function Timeline() {
  return (
    <Area $bg="#1d1d1d" $h={95}>
      <AreaHeader $start={17}>
        <HeaderSide $gap={5}>
          <IconMenu icon="clock" label="编辑器类型" />
          <Dropdown value="回放" label="回放" width={71} pad={13} />
          <Dropdown value="插帧" label="插帧" width={71} pad={9} />
          <Row><Menu>视图</Menu><Menu>标记</Menu></Row>
        </HeaderSide>
        <HeaderCenter $gap={13}>
          <Joined>
            <Tool aria-label="自动插帧" $flat $raised><Icon name="record" /></Tool>
            <Tool aria-label="插帧选项" $flat $dim $w={24}><Icon name="down" size={17} /></Tool>
          </Joined>
          <Joined $gap={1}>
            {transport.map(([icon, label]) => (
              <Tool key={icon} aria-label={label} $flat $raised><Icon name={icon} size={24} color="#e8e8e8" /></Tool>
            ))}
          </Joined>
        </HeaderCenter>
        <HeaderSide $end $gap={8}>
          <NumberField $w={111} $center><input aria-label="当前帧" defaultValue="1" /></NumberField>
          <Joined $gap={1}>
            <Tool aria-label="使用预览范围" $flat $raised $w={27}><Icon name="stopwatch" size={24} color="#e6e6e6" /></Tool>
            <NumberField $w={134} $flat $start={27} $end={22}>起始<input defaultValue="1" /></NumberField>
            <NumberField $w={131} $flat $start={24} $end={21}>结束<input defaultValue="250" /></NumberField>
          </Joined>
        </HeaderSide>
      </AreaHeader>
      <Ruler>
        <RulerStart><CurrentFrame>1</CurrentFrame></RulerStart>
        {frames.map(f => <RulerMark key={f}>{f}</RulerMark>)}
        <RulerEnd />
      </Ruler>
      <Track>
        <RulerStart>
          <TrackHead><Icon name="right" size={12} /></TrackHead>
          <TrackGap />
        </RulerStart>
        {frames.map(f => <TrackCell key={f} />)}
        <TrackTail><Icon name="left" size={12} /></TrackTail>
      </Track>
    </Area>
  )
}

/* ---------- outliner ---------- */

const SearchBox = styled.label`
  display: flex;
  align-items: center;
  gap: 11px;
  width: 174px;
  height: 28px;
  padding-left: 7px;
  border-radius: 5px;
  background: #1d1d1d;
  input {
    width: 100px;
  }
  input::placeholder {
    color: #777;
  }
`
const Tree = styled.div`
  display: flex;
  flex-direction: column;
  flex: 1;
  padding-top: 2px;
`
const TreeRow = styled.div`
  display: flex;
  align-items: center;
  height: 30px;
  padding: 0 17px 0 ${p => p.$indent}px;
  background: ${p => (p.$selected ? '#334d80' : p.$odd ? '#2b2b2b' : 'none')};
  color: ${p => (p.$selected ? '#ffaf29' : '#e6e6e6')};
`
const TreeIcon = styled.span`
  display: flex;
  justify-content: center;
  align-items: center;
  width: 28px;
  height: 28px;
  margin: 0 7px 0 ${p => p.$left || 0}px;
  border-radius: 6px;
  background: ${p => (p.$boxed ? 'rgba(255, 255, 255, .15)' : 'none')};
`
const RowActions = styled.div`
  display: flex;
  align-items: center;
  gap: 9px;
  margin-left: auto;
  color: #e6e6e6;
`
const Check = styled.input.attrs({ type: 'checkbox' })`
  appearance: none;
  display: grid;
  place-items: center;
  width: 17px;
  height: 17px;
  border-radius: 3px;
  background: #e6e6e6;
  &:checked::after {
    content: "";
    width: 6px;
    height: 11px;
    border: solid #222;
    border-width: 0 3px 3px 0;
    transform: rotate(40deg);
  }
`
const Stripes = styled.div`
  flex: 1;
  background: repeating-linear-gradient(#2b2b2b 0 30px, #282828 30px 60px);
`
const Push = styled.span`
  flex: 1;
`

function Outliner() {
  return (
    <Area $bg="#282828" $h={405}>
      <AreaHeader $bg="#2e2e2e" $start={19} $end={3}>
        <Row $gap={10}>
          <IconMenu icon="tree" label="编辑器类型" />
          <IconMenu icon="layers" label="显示模式" />
        </Row>
        <Push />
        <SearchBox>
          <Icon name="search" />
          <input aria-label="搜索大纲" placeholder="搜索" />
        </SearchBox>
        <Push />
        <IconMenu icon="filter" label="筛选" />
      </AreaHeader>
      <Tree>
        <TreeRow $indent={32}>
          <TreeIcon><Icon name="collection" /></TreeIcon>场景集合
        </TreeRow>
        <TreeRow $indent={39} $odd>
          <Icon name="wideDown" size={15} />
          <TreeIcon $left={8} $boxed><Icon name="collection" /></TreeIcon>Collection
          <RowActions>
            <Check aria-label="启用集合" defaultChecked />
            <button aria-label="隐藏集合"><Icon name="eye" size={21} /></button>
            <button aria-label="集合渲染"><Icon name="camera" size={21} /></button>
          </RowActions>
        </TreeRow>
        <TreeRow $indent={69} $selected>
          <Icon name="right" size={15} color="#ccc" />
          <TreeIcon $left={8} $boxed><Icon name="meshObject" size={23} color="#e0894a" /></TreeIcon>苏珊娜
          <TreeIcon $left={32}><Icon name="mesh" size={22} color="#1fb5a5" /></TreeIcon>
          <RowActions>
            <button aria-label="隐藏物体"><Icon name="eye" size={21} /></button>
            <button aria-label="物体渲染"><Icon name="camera" size={21} /></button>
          </RowActions>
        </TreeRow>
        <Stripes />
      </Tree>
    </Area>
  )
}

/* ---------- properties ---------- */

const PropsBody = styled.div`
  display: flex;
  flex: 1;
  min-height: 0;
`
const PropTabs = styled.nav`
  display: flex;
  flex: none;
  flex-direction: column;
  width: 46px;
  padding: 13px 0 0 6px;
  background: #1a1a1a;
`
const PropTab = styled.button`
  display: flex;
  align-items: center;
  justify-content: center;
  height: 42px;
  margin-top: ${p => (p.$gap ? 13 : 0)}px;
  border-radius: 6px 0 0 6px;
  background: ${p => (p.$active ? '#303030' : 'none')};
  color: ${p => p.$color || '#b8b8b8'};
`
const PropContent = styled.div`
  display: flex;
  flex-direction: column;
  flex: 1;
  min-width: 0;
  padding: 0 2px 0 12px;
`
const Crumb = styled.div`
  display: flex;
  flex: none;
  align-items: center;
  gap: 16px;
  height: 56px;
  padding: 0 13px 0 4px;
`
const NameRow = styled.div`
  display: flex;
  flex: none;
  gap: 3px;
  height: 28px;
  margin: 14px 9px 16px 3px;
  input {
    flex: 1;
    min-width: 0;
    padding-left: 10px;
    border-radius: 0 5px 5px 0;
    background: #1d1d1d;
  }
`
const Panels = styled.div`
  display: flex;
  gap: 2px;
  flex: 1;
  min-height: 0;
`
const PanelList = styled.div`
  display: flex;
  flex-direction: column;
  flex: 1;
  min-width: 0;
  gap: 2px;
`
const Panel = styled.section`
  flex: none;
  border-radius: 5px;
  background: #3d3d3d;
`
const PanelHeader = styled.button`
  display: flex;
  align-items: center;
  width: 100%;
  height: 38px;
  padding: 0 13px 0 12px;
  gap: 6px;
  color: #e0e0e0;
`
const Grip = styled.span`
  width: 20px;
  height: 10px;
  margin-left: auto;
  background: radial-gradient(circle, #8a8a8a 1px, transparent 2px) 0 0 / 5px 5px;
`
const Scrollbar = styled.div`
  width: 6px;
  align-self: stretch;
  margin: 0 0 120px;
  border-radius: 3px;
  background: #454545;
`
const Fields = styled.div`
  display: flex;
  flex-direction: column;
  gap: 8px;
  padding: 12px 14px 0 0;
`
const FieldGroup = styled.div`
  display: flex;
  flex-direction: column;
  gap: 1px;
`
const FieldRow = styled.div`
  display: grid;
  grid-template-columns: 1fr 118px 32px 28px;
  align-items: center;
  justify-items: center;
  height: 29px;
  label:first-child {
    justify-self: end;
    padding-right: 14px;
  }
`
const FieldInput = styled.input`
  width: 118px;
  height: 29px;
  border-radius: ${p => (p.$pos === 0 ? '5px 5px 0 0' : p.$pos === 2 ? '0 0 5px 5px' : 0)};
  background: #545454;
  text-align: center;
`
const Dot = styled.span`
  grid-column: 4;
  width: 6px;
  height: 6px;
  border-radius: 50%;
  background: #fff;
`
const SubPanel = styled(PanelHeader)`
  padding-left: 34px;
  margin-top: 5px;
`

const propTabs = [
  { icon: 'tool' },
  { icon: 'render', gap: true },
  { icon: 'output' },
  { icon: 'layers' },
  { icon: 'scene' },
  { icon: 'world', color: '#c0505f' },
  { icon: 'archive', gap: true },
  { icon: 'object', gap: true, color: '#e89550', active: true },
  { icon: 'modifier', color: '#6c8fe0' },
  { icon: 'particles', color: '#5f85d8' },
  { icon: 'physics', color: '#5f85d8' },
  { icon: 'constraint', color: '#7f9ce0' },
  { icon: 'mesh', color: '#12b57c' },
  { icon: 'matBall', color: '#b5545c' }
]

function VectorFields({ name, values }) {
  return (
    <FieldGroup>
      {values.map((value, i) => {
        const id = name + i
        return (
          <FieldRow key={id}>
            <label htmlFor={id}>{i === 0 ? `${name} X` : 'XYZ'[i]}</label>
            <FieldInput id={id} $pos={i} defaultValue={value} />
            <button aria-label={`锁定${name}${'XYZ'[i]}`}><Icon name="unlock" size={23} /></button>
            <Dot />
          </FieldRow>
        )
      })}
    </FieldGroup>
  )
}

function Properties() {
  return (
    <Area $bg="#303030">
      <AreaHeader $start={17} $end={11}>
        <Row $gap={38}>
          <IconMenu icon="props" label="编辑器类型" />
          <SearchBox>
            <Icon name="search" />
            <input aria-label="搜索属性" placeholder="搜索" />
          </SearchBox>
        </Row>
        <Push />
        <Tool aria-label="选项"><Icon name="down" size={18} /></Tool>
      </AreaHeader>
      <PropsBody>
        <PropTabs>
          {propTabs.map(t => (
            <PropTab key={t.icon} aria-label={t.icon} $gap={t.gap} $color={t.color} $active={t.active}>
              <Icon name={t.icon} size={23} />
            </PropTab>
          ))}
        </PropTabs>
        <PropContent>
          <Crumb>
            <Icon name="object" size={23} />苏珊娜
            <Push />
            <Icon name="pin" size={23} color="#999" />
          </Crumb>
          <NameRow>
            <IconMenu icon="object" label="物体数据块" />
            <input aria-label="名称" defaultValue="苏珊娜" />
          </NameRow>
          <Panels>
            <PanelList>
              <Panel>
                <PanelHeader><Icon name="wideDown" size={16} />变换<Grip /></PanelHeader>
                <Fields>
                  <VectorFields name="位置" values={['0.3505 m', '0.089671', '0.14721']} />
                  <VectorFields name="旋转" values={['0°', '0°', '0°']} />
                  <FieldRow>
                    <label htmlFor="mode">模式</label>
                    <Picker as="div" $w={118} $pad={11}>
                      <PickerSelect id="mode" defaultValue="XYZ 欧拉"><option>XYZ 欧拉</option></PickerSelect>
                      <Icon name="down" size={17} />
                    </Picker>
                    <Dot />
                  </FieldRow>
                  <VectorFields name="缩放" values={['1.000', '1.000', '1.000']} />
                  <SubPanel><Icon name="right" size={14} />增量变换</SubPanel>
                </Fields>
              </Panel>
              {['关系', '集合', '实例化', '运动路径', '着色方式', '可见性', '视图显示'].map(p => (
                <Panel key={p}>
                  <PanelHeader><Icon name="right" size={16} />{p}<Grip /></PanelHeader>
                </Panel>
              ))}
            </PanelList>
            <Scrollbar />
          </Panels>
        </PropContent>
      </PropsBody>
    </Area>
  )
}

/* ---------- status bar ---------- */

const StatusBar = styled.footer`
  position: relative;
  display: flex;
  flex: none;
  align-items: center;
  gap: 15px;
  height: 31px;
  padding: 0 22px 0 14px;
  color: #9c9c9c;
`
const Ime = styled.div`
  position: absolute;
  right: 565px;
  bottom: 0;
  display: flex;
  align-items: center;
  justify-content: space-around;
  width: 195px;
  height: 28px;
  padding: 0 4px;
  background: #fafafa;
  color: #444;
`
const ImeMode = styled.span`
  width: 20px;
  border: 2px solid #d9776c;
  color: #222;
  font-size: 15px;
  line-height: 18px;
  text-align: center;
`

const mouseFill = {
  left: 'M1 8a6 6 0 0 1 6-6h2v10H1z',
  middle: 'M7 4h6v9H7z',
  right: 'M11 2h2a6 6 0 0 1 6 6v4h-8z'
}

const MouseHint = ({ side, children }) => (
  <Row $gap={1}>
    <svg width="20" height="26" viewBox="0 0 20 26" fill="none" stroke="#9c9c9c" strokeWidth="2" aria-hidden="true">
      <rect x="1" y="1" width="18" height="24" rx="6" opacity=".7" />
      <path d={mouseFill[side]} fill="#9c9c9c" stroke="none" />
    </svg>
    {children}
  </Row>
)

const workspaces = ['布局', '建模', '雕刻', 'UV编辑', '纹理绘制', '着色', '动画', '渲染', '合成', '几何节点', '脚本']

function App() {
  return (
    <>
      <GlobalStyle />
      <Desktop>
        <NotesWindow />
        <Window>
          <TitleBar>
            <AppLogo />
            * (未保存) - Blender 4.5.2 LTS
            <WindowButtons>
              <button aria-label="最小化">
                <svg width="15" height="15" viewBox="0 0 15 15" stroke="#fff" fill="none"><path d="M1 7h13" strokeWidth="2" /></svg>
              </button>
              <button aria-label="最大化">
                <svg width="15" height="15" viewBox="0 0 15 15" stroke="#fff" fill="none"><rect x="1" y="1" width="13" height="13" rx="2" strokeWidth="2" /></svg>
              </button>
              <button aria-label="关闭窗口">
                <svg width="15" height="15" viewBox="0 0 15 15" stroke="#fff" fill="none"><path d="M1 1l13 13M14 1L1 14" strokeWidth="2" /></svg>
              </button>
            </WindowButtons>
          </TitleBar>
          <TopBar>
            <Logo><SiBlender size={27} /></Logo>
            {['文件', '编辑', '渲染', '窗口', '帮助'].map(m => <Menu key={m}>{m}</Menu>)}
            <Workspaces>
              {workspaces.map((w, i) => <Workspace key={w} $active={i === 0}>{w}</Workspace>)}
              <Workspace aria-label="添加工作区"><Icon name="plus" size={17} /></Workspace>
            </Workspaces>
            <DataBlock $w={259} $left="auto">
              <IconMenu icon="scene" label="浏览场景" width={49} flat />
              <input aria-label="场景" defaultValue="Scene" />
              <Tool as="span"><Icon name="pin" color="#888" /></Tool>
              <Tool aria-label="新建场景" $flat $raised><Icon name="copy" color="#ddd" /></Tool>
              <Tool aria-label="删除场景" $flat $dim><Icon name="close" size={15} color="#444" /></Tool>
            </DataBlock>
            <DataBlock $w={228}>
              <IconMenu icon="layers" label="浏览视图层" width={47} flat />
              <input aria-label="视图层" defaultValue="ViewLayer" />
              <Tool aria-label="新建视图层" $flat $raised><Icon name="copy" color="#ddd" /></Tool>
              <Tool aria-label="删除视图层" $flat $dim><Icon name="close" size={15} color="#444" /></Tool>
            </DataBlock>
          </TopBar>
          <Work>
            <Column>
              <ViewportArea />
              <Timeline />
            </Column>
            <Column>
              <Outliner />
              <Properties />
            </Column>
          </Work>
          <StatusBar>
            <MouseHint side="left">选择</MouseHint>
            <MouseHint side="middle">旋转视图</MouseHint>
            <MouseHint side="right">选项</MouseHint>
            <Push />
            4.5.2
            <Ime>
              <ImeMode>五</ImeMode>
              <span>中</span>
              <FaMoon size={15} />
              <span>°,</span>
              <FaKeyboard size={19} />
              <FaUser size={15} />
              <FaWrench size={16} />
            </Ime>
          </StatusBar>
        </Window>
      </Desktop>
    </>
  )
}

export default App
